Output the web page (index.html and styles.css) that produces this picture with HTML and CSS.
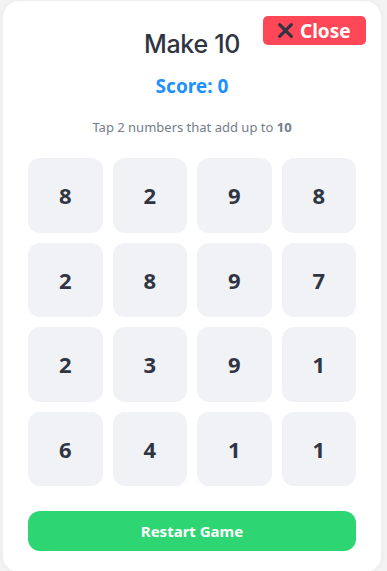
FILE: index.html
```html
<!DOCTYPE html>
<html lang="en">
<head>
  <meta charset="UTF-8">
  <meta name="viewport" content="width=device-width, initial-scale=1.0">
  <title>Make 10</title>
  <link rel="stylesheet" href="styles.css">
</head>
<body>
  <div class="game-card">
    <button class="close-btn">
      <svg class="close-icon" viewBox="0 0 16 16" width="17" height="17">
        <path d="M2.5 2.5 L13.5 13.5 M13.5 2.5 L2.5 13.5" stroke="#2f3542" stroke-width="3" stroke-linecap="round"/>
      </svg>
      Close
    </button>

    <h1 class="title">Make 10</h1>
    <div class="score">Score: 0</div>
    <p class="hint">Tap 2 numbers that add up to <b>10</b></p>

    <div class="board">
      <div class="tile">8</div>
      <div class="tile">2</div>
      <div class="tile">9</div>
      <div class="tile">8</div>
      <div class="tile">2</div>
      <div class="tile">8</div>
      <div class="tile">9</div>
      <div class="tile">7</div>
      <div class="tile">2</div>
      <div class="tile">3</div>
      <div class="tile">9</div>
      <div class="tile">1</div>
      <div class="tile">6</div>
      <div class="tile">4</div>
      <div class="tile">1</div>
      <div class="tile">1</div>
    </div>

    <button class="restart-btn">Restart Game</button>
  </div>
</body>
</html>
```

FILE: styles.css
```css
body {
  margin: 0;
  padding: 1px 6px 0 3px;
  background-color: #f3f3f4;
  font-family: "Noto Sans", "Open Sans", sans-serif;
}

.game-card {
  position: relative;
  background-color: #fff;
  border-radius: 16px;
  padding: 23px 25px 20px;
  min-height: 528px;
  box-shadow: 0 0 6px rgba(0, 0, 0, 0.05);
}

.close-btn {
  position: absolute;
  top: 15px;
  right: 15px;
  display: flex;
  align-items: center;
  gap: 6px;
  height: 29px;
  width: 103px;
  padding: 0 0 0 14px;
  border: none;
  border-radius: 5px;
  background-color: #ff4757;
  color: #fff;
  font-family: "Noto Sans", sans-serif;
  font-weight: 700;
  font-size: 19px;
  cursor: pointer;
}

.title {
  margin: 0;
  text-align: center;
  font-family: "Inter", sans-serif;
  font-weight: 500;
  font-size: 25px;
  letter-spacing: -0.3px;
  color: #2f3542;
  line-height: 40px;
}

.score {
  margin-top: 9px;
  text-align: center;
  font-weight: 700;
  font-size: 19px;
  color: #1e90ff;
}

.hint {
  margin: 19px 0 0;
  text-align: center;
  font-size: 13px;
  color: #747d8c;
}

.board {
  display: grid;
  grid-template-columns: repeat(4, 1fr);
  gap: 10px;
  margin-top: 22px;
}

.tile {
  aspect-ratio: 1;
  display: flex;
  align-items: center;
  justify-content: center;
  background-color: #f1f2f6;
  border-radius: 12px;
  font-size: 22px;
  font-weight: 700;
  color: #2f3542;
  cursor: pointer;
}

.restart-btn {
  display: block;
  width: 100%;
  height: 40px;
  margin-top: 25px;
  border: none;
  border-radius: 12px;
  background-color: #2ed573;
  color: #fff;
  font-family: "Noto Sans", sans-serif;
  font-weight: 700;
  font-size: 15px;
  cursor: pointer;
}
```
